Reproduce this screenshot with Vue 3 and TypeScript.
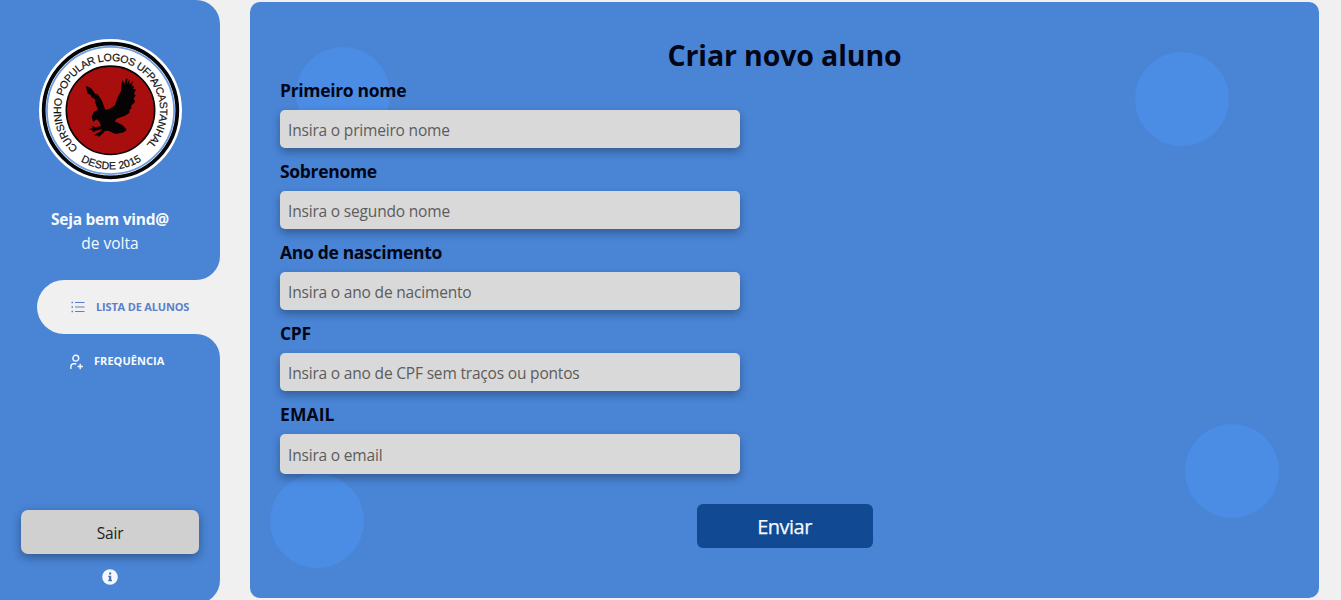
<script setup lang="ts">
interface Field {
  id: string
  label: string
  placeholder: string
}

const fields: Field[] = [
  { id: 'nome', label: 'Primeiro nome', placeholder: 'Insira o primeiro nome' },
  { id: 'sobrenome', label: 'Sobrenome', placeholder: 'Insira o segundo nome' },
  { id: 'nascimento', label: 'Ano de nascimento', placeholder: 'Insira o ano de nacimento' },
  { id: 'cpf', label: 'CPF', placeholder: 'Insira o ano de CPF sem traços ou pontos' },
  { id: 'email', label: 'EMAIL', placeholder: 'Insira o email' },
]
</script>

<template>
  <div class="page">
    <aside class="sidebar">
      <div class="side-top">
        <svg class="logo" viewBox="0 0 144 144" width="144" height="144">
          <defs>
            <path id="ring-top" d="M40 109.8 A49.5 49.5 0 1 1 103 111.5" />
            <path id="ring-bottom" d="M42.6 123.2 A59 59 0 0 0 107.5 120.3" />
          </defs>
          <circle cx="72.5" cy="72.5" r="71.5" fill="#fff" />
          <circle cx="72.5" cy="72.5" r="66.8" fill="#fff" stroke="#050609" stroke-width="3.8" />
          <circle cx="72.5" cy="72.5" r="63.6" fill="none" stroke="#6f9cdf" stroke-width="1.8" />
          <circle cx="72.5" cy="72.3" r="44.2" fill="#a90e0e" stroke="#0b0506" stroke-width="1.6" />
          <path
            class="eagle"
            transform="translate(37 32) scale(.3333)"
            d="M33 48 L48 54 L60 71 L68 73 L80 91 L91 119 L104 117 L120 106 L127 85 L138 63 L139 43 L144 30 L148 45 L152 28 L157 25 L157 42 L163 27 L164 44 L174 32 L170 49 L177 48 L174 58 L183 58 L177 70 L182 77 L176 85 L180 96 L168 108 L170 113 L163 121 L164 128 L150 137 L125 146 L119 154 L143 166 L155 179 L147 187 L122 192 L100 182 L89 184 L82 192 L71 201 L68 196 L58 198 L64 190 L73 187 L82 177 L67 181 L53 187 L53 181 L41 178 L54 174 L49 168 L63 172 L78 168 L72 154 L64 148 L55 156 L50 141 L56 126 L69 119 L61 98 L60 87 L49 82 L48 76 L37 70 Z"
          />
          <text class="ring-text">
            <textPath href="#ring-top" textLength="235" lengthAdjust="spacing">CURSINHO POPULAR LOGOS UFPA/CASTANHAL</textPath>
          </text>
          <text class="ring-text">
            <textPath href="#ring-bottom" textLength="64" lengthAdjust="spacing">DESDE 2015</textPath>
          </text>
        </svg>
        <div class="welcome">
          <strong>Seja bem vind@</strong>
          <span>de volta</span>
        </div>
      </div>
      <div class="nav-active">
        <a class="nav-item active">
          <svg width="14" height="12" viewBox="0 0 14 12" fill="none" stroke="currentColor">
            <path d="M4 1.5h9.5M4 6h9.5M4 10.5h9.5" stroke-width="1.1" />
            <path d="M.5 1.5H2M.5 6H2M.5 10.5H2" stroke-width="1.6" />
          </svg>
          <span>LISTA DE ALUNOS</span>
        </a>
      </div>
      <div class="side-bottom">
        <a class="nav-item freq">
          <svg width="14" height="16" viewBox="0 0 14 16" fill="none" stroke="currentColor" stroke-width="1.4">
            <circle cx="5.8" cy="4.2" r="2.9" />
            <path d="M.9 15v-2.2a3 3 0 0 1 3-3h2.4M10.2 9.8v5.4M7.5 12.5h5.4" />
          </svg>
          <span>FREQUÊNCIA</span>
        </a>
        <button class="exit" type="button">Sair</button>
        <svg class="info" width="16" height="16" viewBox="0 0 16 16">
          <circle cx="8" cy="8" r="7.8" fill="#f3f8ff" />
          <path d="M7 3.6h2.2v2H7zM6.3 6.8h2.9v4h.8v1.4H6.2v-1.4H7V8.2h-.7z" fill="#4a76b8" />
        </svg>
      </div>
    </aside>

    <main class="panel">
      <i class="bubble b1"></i>
      <i class="bubble b2"></i>
      <i class="bubble b3"></i>
      <i class="bubble b4"></i>
      <form class="form">
        <h1>Criar novo aluno</h1>
        <div v-for="f in fields" :key="f.id" class="field">
          <label :for="f.id">{{ f.label }}</label>
          <input :id="f.id" type="text" :placeholder="f.placeholder" />
        </div>
        <button class="send" type="button">Enviar</button>
      </form>
    </main>
  </div>
</template>

<style>
body {
  background: #f0f0f0;
  overflow: hidden;
}
</style>

<style scoped>
* {
  box-sizing: border-box;
}
.page {
  display: flex;
  height: 600px;
  overflow: hidden;
  background: #f0f0f0;
  font-family: "Open Sans", "Noto Sans", sans-serif;
}
.sidebar {
  width: 220px;
  height: 604px;
  flex: none;
  display: flex;
  flex-direction: column;
  background: #f0f0f0;
}
.side-top,
.side-bottom {
  display: flex;
  flex-direction: column;
  align-items: center;
  background: #4984d5;
}
.side-top {
  height: 280px;
  padding-top: 38px;
  border-radius: 0 24px 24px 0;
}
.logo {
  display: block;
  flex: none;
}
.eagle {
  fill: #050304;
}
.ring-text {
  font: 10.6px "Liberation Sans", Arial, sans-serif;
  fill: #111;
  stroke: #111;
  stroke-width: 0.2px;
}
.welcome {
  display: flex;
  flex-direction: column;
  align-items: center;
  margin-top: 25px;
  color: #f6faff;
  font-size: 15.5px;
  line-height: 24px;
}
.welcome strong {
  font-weight: 700;
  letter-spacing: -0.25px;
}
.nav-active {
  height: 54px;
  background: linear-gradient(90deg, #4984d5 100px, #f0f0f0 100px);
}
.nav-item {
  display: flex;
  align-items: center;
  font-size: 11px;
  font-weight: 700;
}
.nav-item span {
  margin-top: -1px;
}
.active {
  height: 54px;
  margin-left: 37px;
  padding-left: 34px;
  gap: 11px;
  border-radius: 27px 0 0 27px;
  background: #f0f0f0;
  color: #5b7fc9;
  letter-spacing: -0.17px;
}
.side-bottom {
  flex: 1;
  border-radius: 0 24px 24px 0;
}
.freq {
  align-self: flex-start;
  height: 54px;
  padding-left: 70px;
  gap: 10px;
  color: #f6faff;
  letter-spacing: 0.05px;
}
.freq svg {
  margin-top: 2px;
}
.exit {
  width: 178px;
  height: 44px;
  margin-top: 122px;
  padding: 1px 0 0;
  flex: none;
  border: 0;
  border-radius: 7px;
  background: #d0d0d0;
  box-shadow: 0 3px 10px rgba(0, 0, 0, 0.35);
  color: #222;
  font: 15.5px "Open Sans", "Noto Sans", sans-serif;
  letter-spacing: -0.2px;
}
.info {
  margin-top: 15px;
}
.panel {
  position: relative;
  width: 1069px;
  height: 596px;
  margin: 2px 0 0 30px;
  border-radius: 10px;
  background: #4984d5;
  overflow: hidden;
}
.bubble {
  position: absolute;
  width: 94px;
  height: 94px;
  border-radius: 50%;
  background: #4b8ce4;
}
.b1 {
  left: 46px;
  top: 45px;
}
.b2 {
  left: 885px;
  top: 50px;
}
.b3 {
  left: 20px;
  top: 472px;
}
.b4 {
  left: 935px;
  top: 422px;
}
.form {
  position: relative;
  display: flex;
  flex-direction: column;
  padding: 32px 30px 0;
}
h1 {
  margin: 0;
  height: 43px;
  line-height: 42px;
  text-align: center;
  font-size: 28.5px;
  font-weight: 700;
  letter-spacing: -0.12px;
  color: #020617;
}
.field {
  display: flex;
  flex-direction: column;
  height: 81px;
}
label {
  height: 33px;
  line-height: 27px;
  font-size: 17.5px;
  font-weight: 700;
  letter-spacing: -0.32px;
  color: #020617;
}
.field:nth-last-child(2) label {
  letter-spacing: 0.1px;
}
input {
  width: 460px;
  height: 38px;
  padding: 2px 8px 0;
  border: 0;
  border-radius: 5px;
  background: #d9d9d9;
  box-shadow: 0 4px 8px rgba(0, 0, 0, 0.3);
  font: 15.5px "Open Sans", "Noto Sans", sans-serif;
  letter-spacing: -0.18px;
}
input::placeholder {
  color: #5c5c5c;
  opacity: 1;
}
.field:nth-last-child(2) input {
  height: 40px;
}
.send {
  width: 176px;
  height: 44px;
  margin-top: 22px;
  align-self: center;
  border: 0;
  border-radius: 6px;
  background: #114992;
  color: #f3f8ff;
  font: 500 20px "Open Sans", "Noto Sans", sans-serif;
  letter-spacing: -0.5px;
  -webkit-text-stroke: 0.25px #f3f8ff;
}
</style>
